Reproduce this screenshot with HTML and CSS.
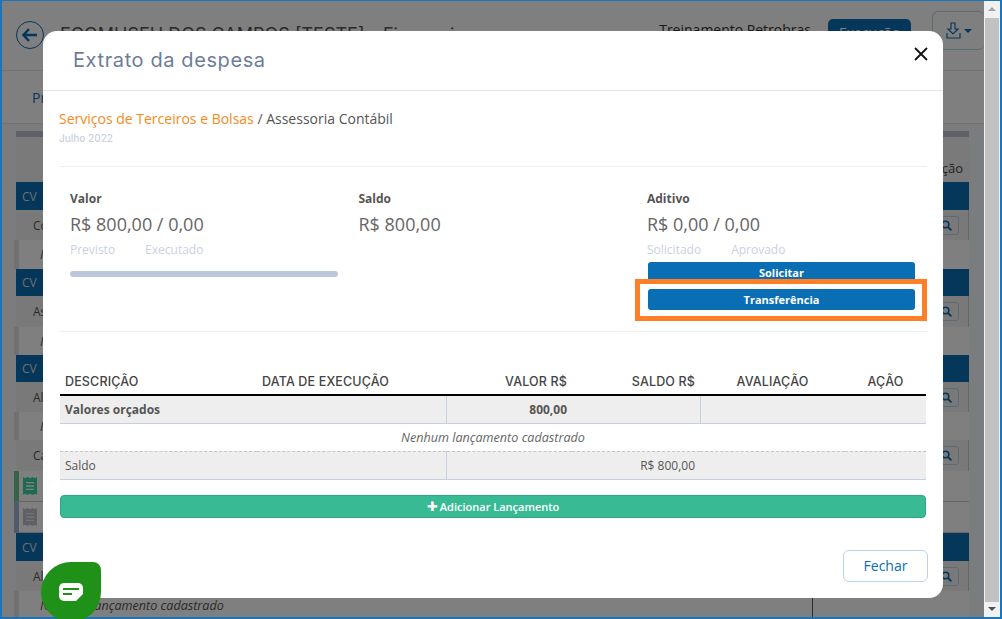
FILE: index.html
```html
<!DOCTYPE html>
<html lang="pt-BR">

<head>
  <meta charset="UTF-8" />
  <meta name="viewport" content="width=device-width, initial-scale=1.0" />
  <title>Extrato da despesa</title>
  <link rel="stylesheet" href="styles.css">
</head>

<body>
  <div class="frame">
    <div class="page">
      <header class="topbar">
        <span class="back">
          <svg width="16" height="14" viewBox="0 0 16 14"><path d="M7 1 1.5 7 7 13M2 7h13" fill="none" stroke="#0a6eb5" stroke-width="2.4"/></svg>
        </span>
        <h1 class="project">ECOMUSEU DOS CAMPOS [TESTE] - Financeiro</h1>
        <span class="client">Treinamento Petrobras</span>
        <span class="status">Execução</span>
        <span class="export">
          <svg width="15" height="18" viewBox="0 0 15 18"><path d="M5 1h4v6h3L7 12 2 7h3zM1 11v5h13v-5" fill="none" stroke="#0a6eb5" stroke-width="1.2"/></svg>
          <i class="caret"></i>
        </span>
      </header>
      <nav class="tabs"><span>Previsão</span></nav>

      <div class="sheet">
        <div class="sheet-bar"></div>
        <div class="sheet-head"><span>Avaliação</span></div>
        <div class="cv cv-a">CV</div>
        <div class="item item-a"><span>Co</span><b class="find"><svg width="11" height="11" viewBox="0 0 11 11"><circle cx="4.5" cy="4.5" r="3.3" fill="none" stroke="#0a6eb5" stroke-width="1.6"/><path d="m7 7 3.4 3.4" stroke="#0a6eb5" stroke-width="1.8"/></svg></b></div>
        <div class="none none-a">N</div>
        <div class="cv cv-b">CV</div>
        <div class="item item-b"><span>As</span><b class="find"><svg width="11" height="11" viewBox="0 0 11 11"><circle cx="4.5" cy="4.5" r="3.3" fill="none" stroke="#0a6eb5" stroke-width="1.6"/><path d="m7 7 3.4 3.4" stroke="#0a6eb5" stroke-width="1.8"/></svg></b></div>
        <div class="none none-b">N</div>
        <div class="cv cv-c">CV</div>
        <div class="item item-c"><span>Al</span><b class="find"><svg width="11" height="11" viewBox="0 0 11 11"><circle cx="4.5" cy="4.5" r="3.3" fill="none" stroke="#0a6eb5" stroke-width="1.6"/><path d="m7 7 3.4 3.4" stroke="#0a6eb5" stroke-width="1.8"/></svg></b></div>
        <div class="none none-c">N</div>
        <div class="item item-d"><span>Ca</span><b class="find"><svg width="11" height="11" viewBox="0 0 11 11"><circle cx="4.5" cy="4.5" r="3.3" fill="none" stroke="#0a6eb5" stroke-width="1.6"/><path d="m7 7 3.4 3.4" stroke="#0a6eb5" stroke-width="1.8"/></svg></b></div>
        <div class="doc doc-ok">
          <svg width="14" height="18" viewBox="0 0 14 21" preserveAspectRatio="none"><path d="M0 0l2 1.500L4.500 0l2.500 1.500L9.500 0 12 1.500 14 0v21l-2-1.500L9.500 21 7 19.500 4.500 21 2 19.500 0 21z" fill="#3ad3a5"/><path d="M3 6.500h8M3 10.500h8M3 14.500h8" stroke="#fff" stroke-width="1.500"/></svg>
        </div>
        <div class="doc doc-off">
          <svg width="14" height="18" viewBox="0 0 14 21" preserveAspectRatio="none"><path d="M0 0l2 1.500L4.500 0l2.500 1.500L9.500 0 12 1.500 14 0v21l-2-1.500L9.500 21 7 19.500 4.500 21 2 19.500 0 21z" fill="#bcc0c6"/><path d="M3 6.500h8M3 10.500h8M3 14.500h8" stroke="#e6e6e6" stroke-width="1.500"/></svg>
        </div>
        <div class="cv cv-d">CV</div>
        <div class="item item-e"><span>Al</span><b class="find"><svg width="11" height="11" viewBox="0 0 11 11"><circle cx="4.5" cy="4.5" r="3.3" fill="none" stroke="#0a6eb5" stroke-width="1.6"/><path d="m7 7 3.4 3.4" stroke="#0a6eb5" stroke-width="1.8"/></svg></b></div>
        <div class="none none-d"><span>Nenhum lançamento cadastrado</span><em></em></div>
      </div>

      <div class="backdrop"></div>
    </div>

    <div class="scrollbar">
      <i class="arrow-up"></i>
      <div class="thumb"></div>
      <i class="arrow-down"></i>
    </div>
  </div>

  <section class="modal">
    <div class="modal-head">
      <h2>Extrato da despesa</h2>
      <svg class="close" width="14" height="14" viewBox="0 0 14 14"><path d="M1 1l12 12M13 1 1 13" stroke="#111" stroke-width="1.800"/></svg>
    </div>

    <div class="modal-body">
      <p class="crumb"><span>Serviços de Terceiros e Bolsas</span> / Assessoria Contábil</p>
      <p class="month">Julho 2022</p>

      <div class="summary">
        <div class="col">
          <h4>Valor</h4>
          <p class="amount">R$ 800,00 / 0,00</p>
          <p class="sub"><span>Previsto</span><span>Executado</span></p>
          <div class="progress"></div>
        </div>
        <div class="col">
          <h4>Saldo</h4>
          <p class="amount">R$ 800,00</p>
        </div>
        <div class="col">
          <h4>Aditivo</h4>
          <p class="amount">R$ 0,00 / 0,00</p>
          <p class="sub"><span>Solicitado</span><span>Aprovado</span></p>
          <button class="btn-blue btn-solicitar">Solicitar</button>
          <button class="btn-blue btn-transf">Transferência</button>
        </div>
      </div>

      <table class="extrato">
        <colgroup>
          <col class="c1"><col class="c2"><col class="c3"><col class="c4"><col class="c5"><col class="c6">
        </colgroup>
        <thead>
          <tr>
            <th>DESCRIÇÃO</th>
            <th>DATA DE EXECUÇÃO</th>
            <th class="right">VALOR R$</th>
            <th class="right">SALDO R$</th>
            <th class="center">AVALIAÇÃO</th>
            <th class="center">AÇÃO</th>
          </tr>
        </thead>
        <tbody>
          <tr class="orcado">
            <td colspan="2">Valores orçados</td>
            <td class="right line-left">800,00</td>
            <td></td>
            <td colspan="2" class="line-left"></td>
          </tr>
          <tr class="vazio">
            <td colspan="6">Nenhum lançamento cadastrado</td>
          </tr>
          <tr class="saldo">
            <td colspan="2">Saldo</td>
            <td colspan="2" class="right line-left">R$ 800,00</td>
            <td colspan="2"></td>
          </tr>
        </tbody>
      </table>

      <button class="btn-add"><b>+</b>Adicionar Lançamento</button>
    </div>

    <div class="modal-foot">
      <button class="btn-close">Fechar</button>
    </div>
  </section>

  <div class="highlight"></div>

  <div class="chat">
    <svg width="24" height="18" viewBox="0 0 24 18"><path d="M5 0h14a5 5 0 0 1 5 5v6l-7 7H5a5 5 0 0 1-5-5V5a5 5 0 0 1 5-5z" fill="#fff"/><path d="M4 6h16" stroke="#1f9118" stroke-width="2"/><path d="M4 11h9" stroke="#1f9118" stroke-width="2"/></svg>
  </div>
</body>

</html>
```

FILE: styles.css
```css
* {
  box-sizing: border-box;
}

html,
body {
  height: 100%;
  margin: 0;
  overflow: hidden;
}

body {
  font-family: 'Open Sans', sans-serif;
  color: #444;
  background: #fff;
}

h1,
h2,
h4,
p {
  margin: 0;
  font-weight: normal;
}

/* pagina de fundo */
.frame {
  display: flex;
  height: 619px;
  border: 1px solid #1b75bc;
  border-width: 1px 2px 2px 2px;
}

.page {
  position: relative;
  flex: 1;
  overflow: hidden;
  background: #f4f8fb;
}

.topbar {
  display: flex;
  align-items: flex-start;
  height: 70px;
  padding: 10px 0 0 14px;
  background: #fff;
  border-bottom: 1px solid #e3e8ee;
}

.back {
  display: flex;
  align-items: center;
  justify-content: center;
  width: 28px;
  height: 28px;
  margin: 10px 0 0 0;
  border: 1px solid #0a6eb5;
  border-radius: 50%;
}

.project {
  flex: 1;
  margin: 13px 0 0 16px;
  font-family: Inter, sans-serif;
  font-size: 18px;
  color: #555;
}

.client {
  margin-top: 9px;
  font-size: 14px;
  color: #333;
}

.status {
  width: 83px;
  height: 32px;
  margin: 8px 0 0 17px;
  padding-top: 4px;
  font-size: 14px;
  text-align: center;
  color: #fff;
  background: #0a6eb5;
  border-radius: 5px;
}

.export {
  display: flex;
  align-items: center;
  gap: 3px;
  width: 52px;
  height: 39px;
  margin-left: 21px;
  padding-left: 13px;
  border: 1px solid #b9d4e8;
  border-radius: 6px;
  border-right: 0;
}

.caret {
  border: 4px solid transparent;
  border-top-color: #0a6eb5;
  border-bottom: 0;
}

.tabs {
  height: 53px;
  padding: 17px 0 0 30px;
  font-size: 14px;
  color: #0a6eb5;
  background: #fff;
  border-bottom: 1px solid #e3e8ee;
}

.sheet {
  margin: 7px 15px 0 14px;
  font-size: 12px;
  background: #fff;
}

.sheet-bar {
  height: 6px;
  background: #bcc4d0;
}

.sheet-head {
  display: flex;
  justify-content: flex-end;
  height: 45px;
  padding: 22px 6px 0 0;
  background: #f4f4f4;
  font-size: 13px;
}

.cv {
  display: flex;
  align-items: center;
  padding-left: 6px;
  font-size: 12px;
  color: #ddd;
  background: #0a6eb5;
}

.cv-a {
  height: 28px;
}

.cv-b {
  height: 27px;
}

.cv-c {
  height: 27px;
}

.cv-d {
  height: 28px;
}

.item {
  display: flex;
  align-items: center;
  justify-content: space-between;
  padding: 0 9px 0 17px;
  color: #555;
  background: #f2f2f2;
  border-right: 1px solid #ccc;
}

.item-a {
  height: 30px;
}

.item-b {
  height: 31px;
}

.item-c {
  height: 30px;
}

.item-d {
  height: 31px;
}

.item-e {
  height: 30px;
}

.find {
  display: flex;
  align-items: center;
  justify-content: center;
  width: 25px;
  height: 19px;
  border: 1px solid #b9d4e8;
  border-radius: 3px;
}

.none {
  display: flex;
  align-items: center;
  margin-left: -2px;
  padding-left: 21px;
  font-size: 12.6px;
  font-style: italic;
  color: #555;
  background: #fff;
  border-left: 5px solid #e2e2e2;
}

.none-a {
  height: 29px;
}

.none-b {
  height: 28px;
}

.none-c {
  height: 28px;
}

.none-d {
  position: relative;
  height: 28px;
}

.none-d em {
  position: absolute;
  left: 793px;
  top: 0;
  bottom: 0;
  width: 1px;
  background: #555;
}

.doc {
  height: 31px;
  margin-left: -2px;
  padding: 6px 0 0 4px;
  background: #fff;
  border-left: 5px solid;
  border-bottom: 1px solid #ccc;
}

.doc-ok {
  border-left-color: #6fc490;
}

.doc-off {
  border-left-color: #a0b4d4;
}

.backdrop {
  position: absolute;
  inset: 0;
  background: rgba(0, 0, 0, .5);
}

.scrollbar {
  display: flex;
  flex-direction: column;
  align-items: center;
  width: 16px;
  background: #f1f1f1;
}

.thumb {
  flex: 1;
  width: 14px;
  margin: 7px 0 5px;
  background: #c1c1c1;
}

.arrow-up,
.arrow-down {
  margin-top: 6px;
  border: 4px solid transparent;
  border-top: 0;
  border-bottom: 4px solid #a3a3a3;
}

.arrow-down {
  margin: 0 0 6px;
  border: 4px solid transparent;
  border-bottom: 0;
  border-top: 4px solid #505050;
}

/* modal */
.modal {
  position: absolute;
  top: 31px;
  left: 43px;
  width: 900px;
  height: 567px;
  background: #fff;
  border-radius: 14px;
}

.modal-head {
  position: relative;
  height: 60px;
  padding: 16px 0 0 30px;
  border-bottom: 1px solid #e6e6e6;
}

.modal-head h2 {
  font-family: Inter, sans-serif;
  font-size: 20px;
  letter-spacing: .6px;
  line-height: 26px;
  color: #6d7d98;
}

.close {
  position: absolute;
  top: 16px;
  right: 15px;
}

.modal-body {
  padding: 18px 16px 0 16px;
}

.crumb {
  font-size: 14px;
  line-height: 20px;
  color: #555;
}

.crumb span {
  color: #f78a1d;
}

.month {
  margin-top: 2px;
  font-family: Inter, sans-serif;
  font-size: 10px;
  font-weight: 500;
  line-height: 14px;
  color: #c8d1df;
}

.summary {
  display: flex;
  height: 166px;
  margin: 21px 0 0 1px;
  padding: 24px 0 0 10px;
  border-top: 1px solid #eee;
  border-bottom: 1px solid #eee;
}

.col {
  flex: 0 0 288.500px;
}

.col h4 {
  font-size: 12px;
  font-weight: 700;
  line-height: 16px;
  color: #555;
}

.amount {
  margin-top: 5px;
  font-size: 18px;
  line-height: 25px;
  color: #666;
}

.sub {
  display: flex;
  gap: 30px;
  margin-top: 5px;
  font-size: 12px;
  line-height: 16px;
  color: #c8d1df;
}

.progress {
  width: 268px;
  height: 6px;
  margin-top: 13px;
  background: #bcc8da;
  border-radius: 3px;
}

.btn-blue {
  display: block;
  width: 267px;
  height: 21px;
  margin-left: 1px;
  padding: 0;
  font-family: inherit;
  font-size: 11px;
  font-weight: 700;
  color: #fff;
  background: #0a6eb5;
  border: 0;
  border-radius: 3px;
}

.btn-solicitar {
  margin-top: 4px;
}

.btn-transf {
  margin-top: 6px;
}

.extrato {
  width: 866px;
  margin: 36px 0 0 1px;
  border-collapse: collapse;
  table-layout: fixed;
  font-size: 12px;
  color: #555;
}

.c1 {
  width: 197px;
}

.c2 {
  width: 189px;
}

.c3 {
  width: 126px;
}

.c4 {
  width: 128px;
}

.c5 {
  width: 145px;
}

.c6 {
  width: 81px;
}

.extrato th {
  height: 27px;
  padding: 0 5px;
  font-family: Inter, sans-serif;
  font-size: 12.500px;
  font-weight: 500;
  letter-spacing: .15px;
  text-align: left;
  color: #444;
  border-bottom: 2px solid #000;
}

.extrato td {
  height: 28px;
  padding: 0 5px;
}

.extrato .right {
  text-align: right;
}

.extrato .center {
  text-align: center;
}

.line-left {
  border-left: 1px solid #c5cfdd;
}

.orcado td {
  font-weight: 700;
  background: #eee;
  border-bottom: 1px solid #c5cfdd;
}

.vazio td {
  font-size: 12.6px;
  font-style: italic;
  text-align: center;
  color: #666;
  border-bottom: 1px dashed #c5c5c5;
}

.saldo td {
  background: #eee;
  border-bottom: 1px solid #c5cfdd;
}

.btn-add {
  display: flex;
  align-items: center;
  justify-content: center;
  gap: 2px;
  width: 866px;
  height: 23px;
  margin: 15px 0 0 1px;
  padding: 0;
  font-family: inherit;
  font-size: 11px;
  font-weight: 600;
  color: #fff;
  background: #38bb94;
  border: 1px solid #2ea883;
  border-radius: 4px;
}

.btn-add b {
  font-size: 19px;
  line-height: 16px;
}

.modal-foot {
  display: flex;
  justify-content: flex-end;
  margin-top: 32px;
  padding-right: 15px;
}

.btn-close {
  width: 85px;
  height: 32px;
  padding: 0;
  font-family: inherit;
  font-size: 14px;
  color: #0a6eb5;
  background: #fff;
  border: 1px solid #b9d4e8;
  border-radius: 6px;
}

/* marcacao laranja sobre a tela */
.highlight {
  position: absolute;
  top: 279px;
  left: 635px;
  width: 292px;
  height: 42px;
  border: 5px solid #ff7f27;
}

.chat {
  position: absolute;
  top: 562px;
  left: 41px;
  display: flex;
  align-items: center;
  justify-content: center;
  width: 60px;
  height: 60px;
  background: #1f9118;
  border-radius: 50% 8px 50% 50%;
}
```
